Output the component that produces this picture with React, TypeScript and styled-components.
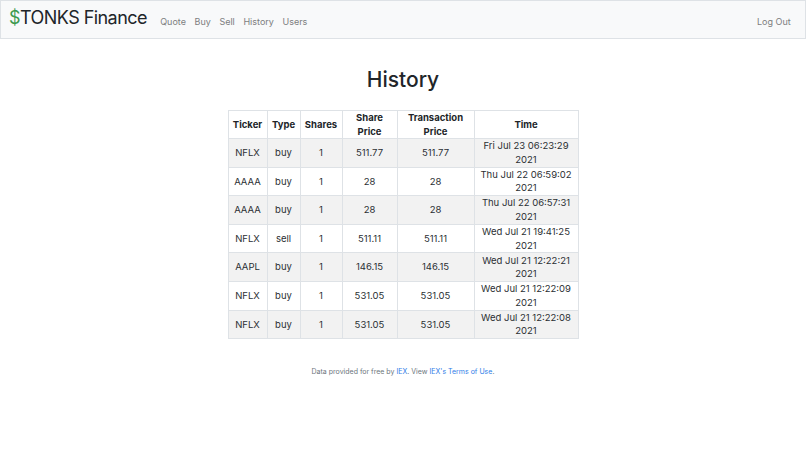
import React from "react";
import styled, { createGlobalStyle } from "styled-components";

const Global = createGlobalStyle`
  html, body { margin: 0; padding: 0; background: #fff; }
  body { font-family: Inter, "Liberation Sans", Arial, sans-serif; color: #212529; }
  * { box-sizing: border-box; }
`;

const Nav = styled.nav`
  height: 39px;
  background: #f8f9fa;
  border: 1px solid #dee2e6;
  display: flex;
  align-items: center;
  padding: 0 10px 0 8px;
`;

const Brand = styled.a`
  font-size: 18px;
  letter-spacing: -0.55px;
  color: #212529;
  text-decoration: none;
  margin-right: 9px;
  margin-top: -4px;
  span { color: #3c9a4f; }
`;

const NavList = styled.div`
  display: flex;
  align-items: center;
  margin-top: 3px;
`;

const NavLink = styled.a`
  font-size: 9px;
  color: #7d7e7f;
  text-decoration: none;
  padding: 0 4.3px;
`;

const Spacer = styled.div`
  flex: 1;
`;

const Main = styled.main`
  display: flex;
  flex-direction: column;
  align-items: center;
  padding-top: 27px;
`;

const Title = styled.h1`
  margin: 0 0 16px;
  font-size: 21px;
  font-weight: 500;
  line-height: 28px;
  color: #212529;
`;

const Table = styled.table`
  border-collapse: collapse;
  table-layout: fixed;
  width: 350px;
  font-size: 9.5px;
  line-height: 13.5px;
`;

const Th = styled.th`
  border: 1px solid #dee2e6;
  font-weight: 700;
  padding: 0 4px;
  height: 28px;
  text-align: center;
  vertical-align: middle;
  color: #212529;
`;

const Tr = styled.tr<{ $striped: boolean }>`
  background: ${(p) => (p.$striped ? "#f2f2f2" : "#fff")};
`;

const Td = styled.td`
  border: 1px solid #dee2e6;
  padding: 0 4px;
  height: 28.6px;
  text-align: center;
  vertical-align: middle;
  color: #2b2f33;
`;

const Footer = styled.footer`
  margin-top: 28px;
  font-size: 7px;
  color: #6c757d;
  text-align: center;
  a { color: #2f7ee8; text-decoration: none; }
`;

const rows = [
  ["NFLX", "buy", "1", "511.77", "511.77", "Fri Jul 23 06:23:29 2021"],
  ["AAAA", "buy", "1", "28", "28", "Thu Jul 22 06:59:02 2021"],
  ["AAAA", "buy", "1", "28", "28", "Thu Jul 22 06:57:31 2021"],
  ["NFLX", "sell", "1", "511.11", "511.11", "Wed Jul 21 19:41:25 2021"],
  ["AAPL", "buy", "1", "146.15", "146.15", "Wed Jul 21 12:22:21 2021"],
  ["NFLX", "buy", "1", "531.05", "531.05", "Wed Jul 21 12:22:09 2021"],
  ["NFLX", "buy", "1", "531.05", "531.05", "Wed Jul 21 12:22:08 2021"],
];

const widths = [39, 33, 42, 55, 77, 104];
const heads = ["Ticker", "Type", "Shares", "Share Price", "Transaction Price", "Time"];

export default function App() {
  return (
    <>
      <Global />
      <Nav>
        <Brand href="#"><span>$</span>TONKS Finance</Brand>
        <NavList>
          <NavLink href="#">Quote</NavLink>
          <NavLink href="#">Buy</NavLink>
          <NavLink href="#">Sell</NavLink>
          <NavLink href="#">History</NavLink>
          <NavLink href="#">Users</NavLink>
        </NavList>
        <Spacer />
        <NavList>
          <NavLink href="#">Log Out</NavLink>
        </NavList>
      </Nav>
      <Main>
        <Title>History</Title>
        <Table>
          <colgroup>
            {widths.map((w, i) => (
              <col key={i} style={{ width: w }} />
            ))}
          </colgroup>
          <thead>
            <tr>
              {heads.map((h) => (
                <Th key={h}>{h}</Th>
              ))}
            </tr>
          </thead>
          <tbody>
            {rows.map((r, i) => (
              <Tr key={i} $striped={i % 2 === 0}>
                {r.map((c, j) => (
                  <Td key={j}>{c}</Td>
                ))}
              </Tr>
            ))}
          </tbody>
        </Table>
        <Footer>
          Data provided for free by <a href="#">IEX</a>. View <a href="#">IEX's Terms of Use</a>.
        </Footer>
      </Main>
    </>
  );
}
